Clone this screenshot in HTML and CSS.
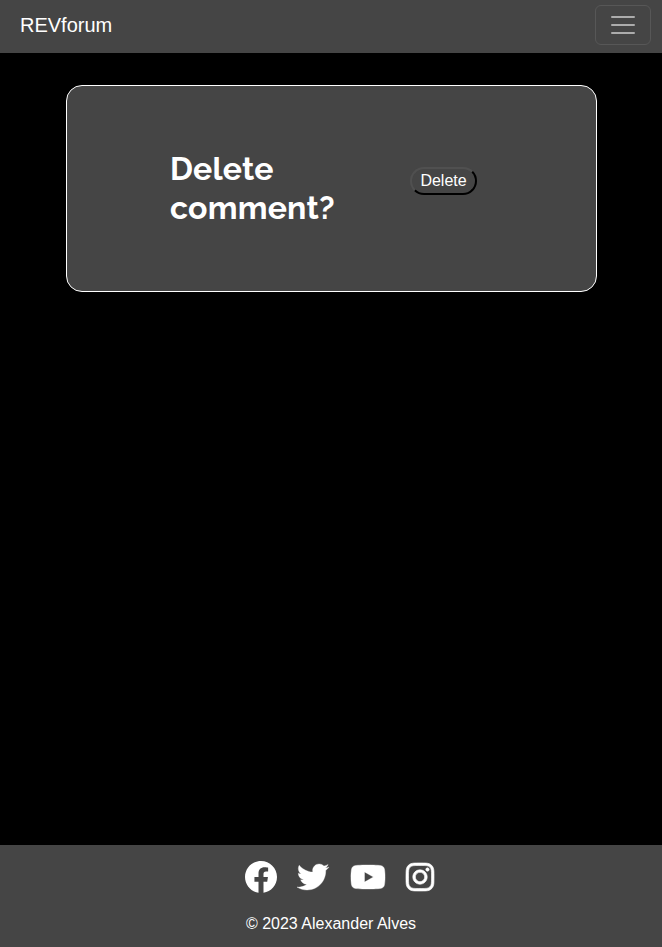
FILE: index.html
```html
<!DOCTYPE html>
<html lang="en">
<head>
<meta charset="utf-8">
<title>REVforum</title>
<link rel="stylesheet" href="styles.css">
</head>
<body>
<header class="navbar">
  <a class="brand">REVforum</a>
  <button class="toggler" aria-label="Toggle navigation">
    <svg width="30" height="30" viewBox="0 0 30 30"><path stroke="currentColor" stroke-linecap="round" stroke-miterlimit="10" stroke-width="2" d="M4 7h22M4 15h22M4 23h22"/></svg>
  </button>
</header>
<main>
  <section class="card">
    <h1>Delete comment?</h1>
    <button class="delete">Delete</button>
  </section>
</main>
<footer>
  <div class="social">
    <svg width="32" height="32" viewBox="8 8 496 496"><path d="M504 256C504 119 393 8 256 8S8 119 8 256c0 123.780 90.690 226.380 209.250 245V327.690h-63V256h63v-54.640c0-62.150 37-96.480 93.670-96.480 27.140 0 55.520 4.840 55.520 4.840v61h-31.280c-30.800 0-40.410 19.120-40.410 38.730V256h68.780l-11 71.690h-57.780V501C413.310 482.380 504 379.780 504 256z"/></svg>
    <svg class="twitter" width="32" height="32" viewBox="0 0 512 512"><path d="M459.370 151.716c.325 4.548.325 9.097.325 13.645 0 138.720-105.583 298.558-298.558 298.558-59.452 0-114.680-17.219-161.137-47.106 8.447.974 16.568 1.299 25.340 1.299 49.055 0 94.213-16.568 130.274-44.832-46.132-.975-84.792-31.188-98.112-72.772 6.498.974 12.995 1.624 19.818 1.624 9.421 0 18.843-1.300 27.614-3.573-48.081-9.747-84.143-51.980-84.143-102.985v-1.299c13.969 7.797 30.214 12.670 47.431 13.319-28.264-18.843-46.781-51.005-46.781-87.391 0-19.492 5.197-37.360 14.294-52.954 51.655 63.675 129.300 105.258 216.365 109.807-1.624-7.797-2.599-15.918-2.599-24.040 0-57.828 46.782-104.934 104.934-104.934 30.213 0 57.502 12.670 76.670 33.137 23.715-4.548 46.456-13.320 66.599-25.340-7.798 24.366-24.366 44.833-46.132 57.827 21.117-2.273 41.584-8.122 60.426-16.243-14.292 20.791-32.161 39.308-52.628 54.253z"/></svg>
    <svg class="youtube" width="36" height="32" viewBox="0 0 576 512"><path d="M549.655 124.083c-6.281-23.650-24.787-42.276-48.284-48.597C458.781 64 288 64 288 64S117.220 64 74.629 75.486c-23.497 6.322-42.003 24.947-48.284 48.597-11.412 42.867-11.412 132.305-11.412 132.305s0 89.438 11.412 132.305c6.281 23.650 24.787 41.500 48.284 47.821C117.220 448 288 448 288 448s170.780 0 213.371-11.486c23.497-6.321 42.003-24.171 48.284-47.821 11.412-42.867 11.412-132.305 11.412-132.305s0-89.438-11.412-132.305zm-317.510 213.508V175.185l142.739 81.205-142.739 81.201z"/></svg>
    <svg class="instagram" width="28" height="32" viewBox="0 0 448 512"><path d="M224.100 141c-63.600 0-114.900 51.300-114.900 114.900s51.300 114.900 114.900 114.900S339 319.500 339 255.900 287.700 141 224.100 141zm0 189.600c-41.100 0-74.700-33.500-74.700-74.700s33.500-74.700 74.700-74.700 74.700 33.500 74.700 74.700-33.600 74.700-74.700 74.700zm146.400-194.300c0 14.900-12 26.800-26.800 26.800-14.900 0-26.800-12-26.800-26.800s12-26.800 26.800-26.800 26.800 12 26.800 26.800zm76.100 27.200c-1.700-35.900-9.900-67.700-36.200-93.900-26.200-26.200-58-34.400-93.900-36.200-37-2.100-147.900-2.100-184.900 0-35.800 1.700-67.600 9.900-93.900 36.100s-34.400 58-36.200 93.900c-2.100 37-2.100 147.900 0 184.900 1.700 35.900 9.900 67.700 36.200 93.900s58 34.400 93.900 36.200c37 2.100 147.900 2.100 184.900 0 35.900-1.700 67.700-9.900 93.900-36.200 26.200-26.200 34.400-58 36.200-93.900 2.100-37 2.100-147.800 0-184.800zM398.800 388c-7.800 19.600-22.900 34.700-42.600 42.600-29.500 11.700-99.500 9-132.100 9s-102.700 2.600-132.100-9c-19.600-7.800-34.700-22.900-42.600-42.600-11.700-29.500-9-99.500-9-132.100s-2.600-102.700 9-132.100c7.800-19.600 22.900-34.700 42.600-42.600 29.500-11.700 99.500-9 132.100-9s102.700-2.600 132.100 9c19.600 7.800 34.700 22.900 42.600 42.600 11.700 29.500 9 99.500 9 132.100s2.700 102.700-9 132.100z"/></svg>
  </div>
  <p>© 2023 Alexander Alves</p>
</footer>
</body>
</html>
```
FILE: styles.css
```css
* { box-sizing: border-box; }

body {
  margin: 0;
  min-height: 100vh;
  display: flex;
  flex-direction: column;
  background: #000;
  color: #fff;
  font: 16px/24px "Liberation Sans", Arial, sans-serif;
}

.navbar {
  height: 53px;
  padding: 5px 11px 8px 20px;
  display: flex;
  align-items: center;
  justify-content: space-between;
  background: #454545;
}

.brand {
  font-size: 20px;
  line-height: 30px;
}

.toggler {
  width: 56px;
  height: 40px;
  padding: 0;
  display: flex;
  align-items: center;
  justify-content: center;
  background: transparent;
  border: 1px solid #575757;
  border-radius: 6px;
  color: #acacac;
}

main {
  flex: 1;
  padding: 32px 65px 0 66px;
}

.card {
  height: 207px;
  padding: 63px 0 0 103px;
  display: flex;
  align-items: flex-start;
  background: #454545;
  border: 1px solid #fff;
  border-radius: 16px;
}

h1 {
  width: 240px;
  margin: 0;
  padding-right: 60px;
  font: 700 32px/39px Raleway, Lato, sans-serif;
  letter-spacing: 0.2px;
}

.delete {
  width: 67px;
  height: 28px;
  margin-top: 18px;
  padding: 0;
  background: #454545;
  border: 2px solid;
  border-color: #505050 #000 #000 #505050;
  border-radius: 16px;
  color: #fff;
  font: 16px/24px "Liberation Sans", Arial, sans-serif;
}

footer {
  height: 102px;
  padding-top: 16px;
  background: #454545;
  text-align: center;
}

.social {
  display: flex;
  justify-content: center;
  gap: 20px;
  padding-left: 17px;
}

.social svg {
  fill: #fff;
  overflow: visible;
}

.social .twitter {
  stroke: #fff;
  stroke-width: 5px;
}

.social .youtube {
  margin-left: 1px;
  stroke: #fff;
  stroke-width: 6px;
}

.social .instagram {
  stroke: #fff;
  stroke-width: 10px;
}

footer p { margin: 19px 0 0; }
```
